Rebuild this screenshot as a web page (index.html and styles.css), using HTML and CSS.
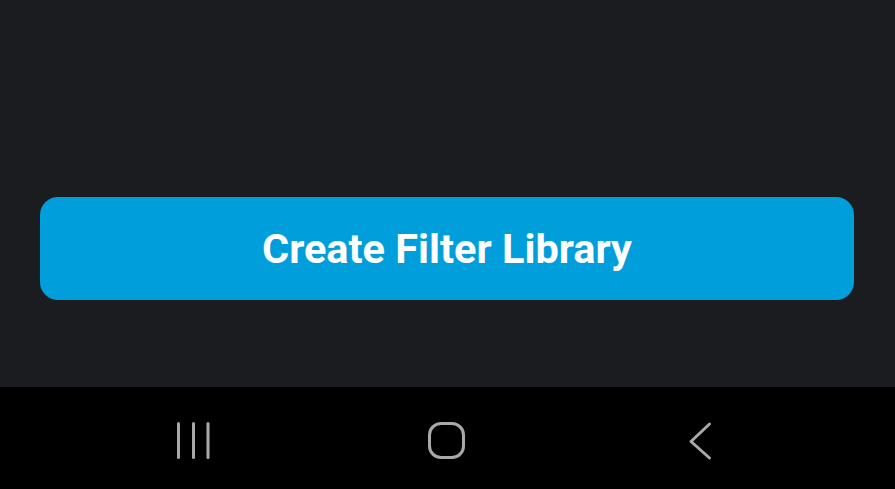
FILE: index.html
```html
<!DOCTYPE html>
<html>
<head>
<meta charset="utf-8">
<link rel="stylesheet" href="styles.css">
</head>
<body>
<div class="screen">
  <main class="content">
    <button class="primary">Create Filter Library</button>
  </main>
  <nav class="navbar">
    <svg class="icon" width="40" height="40" viewBox="0 0 40 40">
      <g stroke="#a9a9a9" stroke-width="3" stroke-linecap="round">
        <line x1="5.5" y1="2.5" x2="5.5" y2="36.5"/>
        <line x1="20.5" y1="2.5" x2="20.5" y2="36.5"/>
        <line x1="35" y1="2.5" x2="35" y2="36.5"/>
      </g>
    </svg>
    <svg class="icon" width="40" height="40" viewBox="0 0 40 40">
      <rect x="2.5" y="2.5" width="34" height="34" rx="11.5" fill="none" stroke="#a9a9a9" stroke-width="3"/>
    </svg>
    <svg class="icon" width="40" height="40" viewBox="0 0 40 40">
      <polyline points="28.5,3 10,20.5 28.5,37" fill="none" stroke="#a9a9a9" stroke-width="3" stroke-linecap="round" stroke-linejoin="round"/>
    </svg>
  </nav>
</div>
</body>
</html>
```
FILE: styles.css
```css
* { box-sizing: border-box; }
html, body { margin: 0; padding: 0; }
body {
  width: 895px;
  height: 489px;
  background: #1b1c1f;
  font-family: Roboto, "Noto Sans", sans-serif;
  overflow: hidden;
}
.screen {
  display: flex;
  flex-direction: column;
  height: 489px;
}
.content {
  flex: 0 0 387px;
  padding: 197px 41px 0 40px;
}
.primary {
  display: block;
  width: 100%;
  height: 103px;
  border: none;
  border-radius: 18px;
  background: #009edb;
  color: #ffffff;
  font-family: Roboto, "Noto Sans", sans-serif;
  font-weight: 700;
  font-size: 41.5px;
  letter-spacing: 0;
  padding: 0;
}
.navbar {
  flex: 1;
  background: #000000;
  display: grid;
  grid-template-columns: 1fr 1fr 1fr;
  align-items: center;
  justify-items: center;
  padding: 5px 67px 0 66px;
}
```
